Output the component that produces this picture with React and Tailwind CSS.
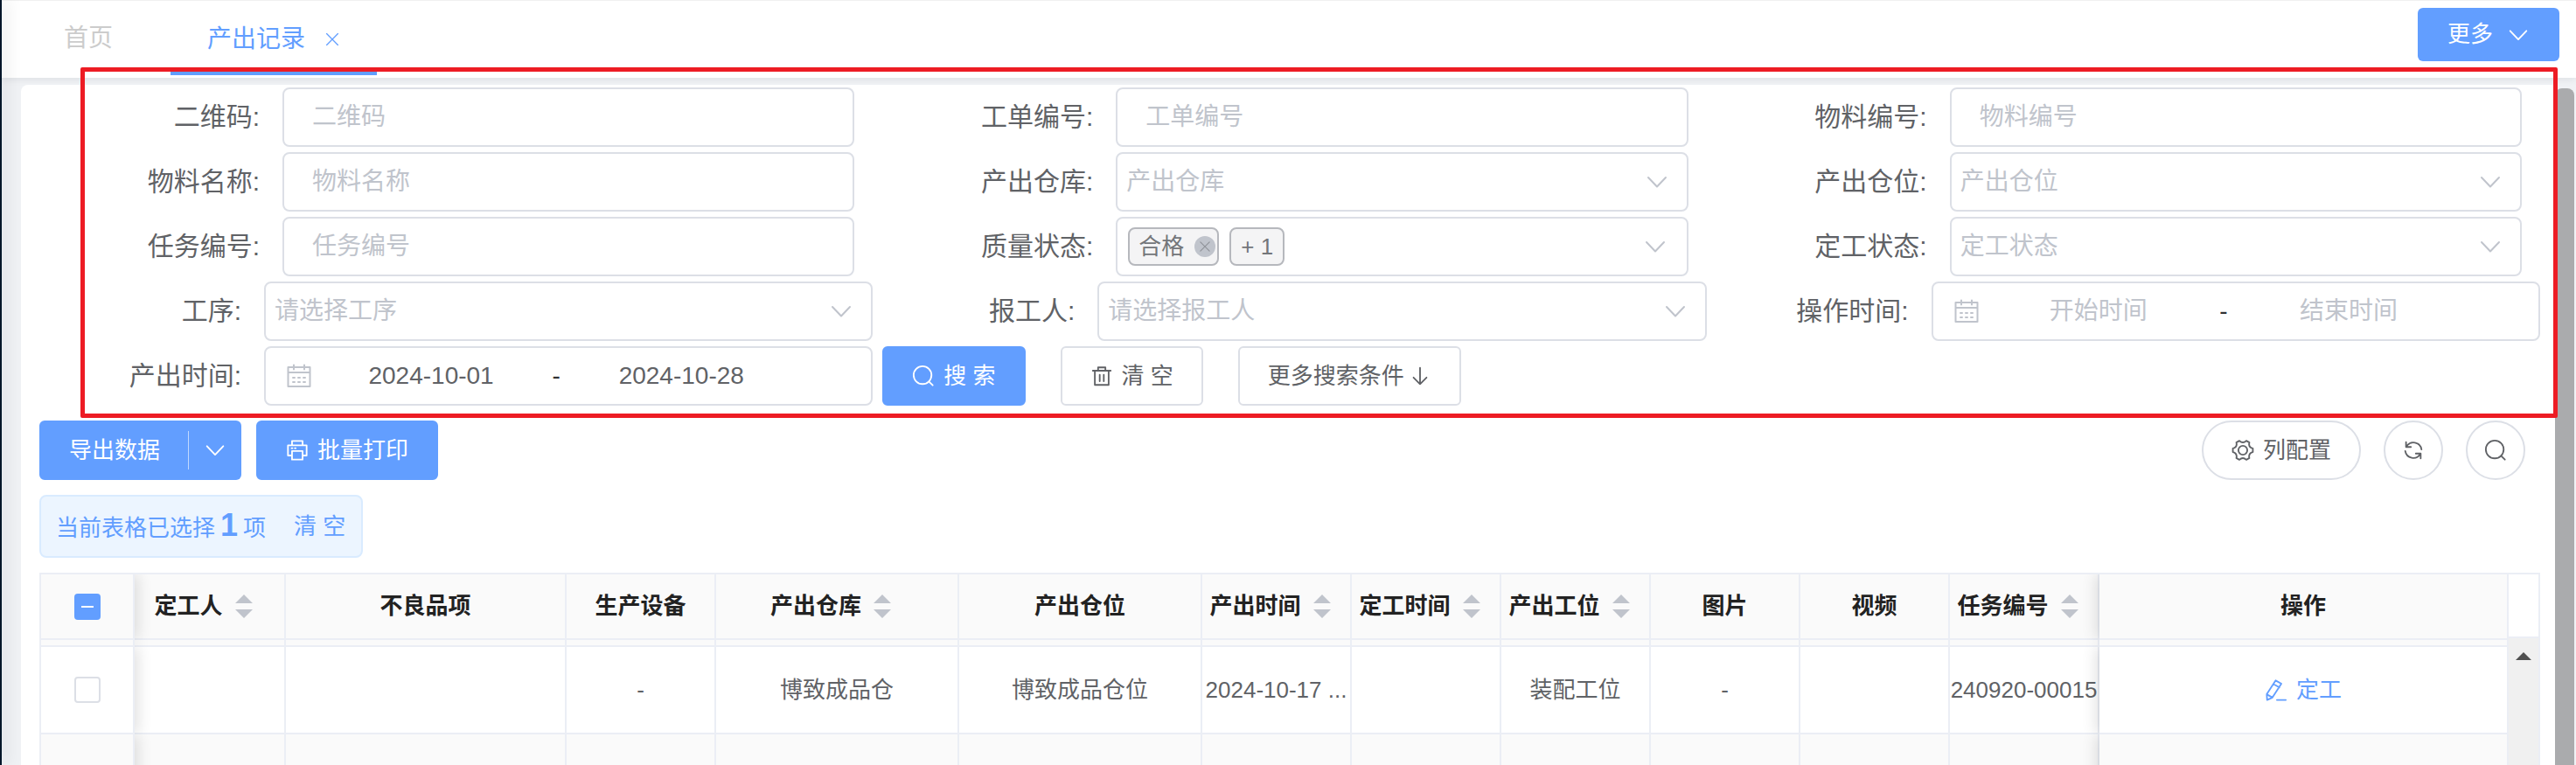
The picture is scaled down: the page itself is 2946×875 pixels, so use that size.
import React from "react";

const stroke = { fill: "none", stroke: "currentColor", strokeLinecap: "round", strokeLinejoin: "round" };

function Icon({ className = "size-[26px]", width = 2, children }) {
  return (
    <svg viewBox="0 0 28 28" className={`shrink-0 ${className}`} strokeWidth={width} {...stroke} aria-hidden="true">
      {children}
    </svg>
  );
}

const ChevronDown = (p) => (
  <Icon {...p}>
    <path d="M4 9 L14 19.5 L24 9" />
  </Icon>
);
const SearchIcon = () => (
  <Icon>
    <circle cx="13" cy="13" r="11" />
    <path d="M20.8 20.8 L25.5 25.5" />
  </Icon>
);
const TrashIcon = () => (
  <Icon>
    <path d="M3 7.5h22M9.5 7V3.5h9V7M5.5 8v17h17V8M11.5 12.5v8M16.5 12.5v8" />
  </Icon>
);
const ArrowDownIcon = () => (
  <Icon>
    <path d="M14 4v20M6 16l8 8 8-8" />
  </Icon>
);
const CalendarIcon = () => (
  <Icon className="size-7 text-[#c0c4cc]">
    <path d="M1.5 4h25v22h-25zM1.5 10h25M8 1.5v5M20 1.5v5" />
    <path d="M7 16h2M13 16h2M19 16h2M7 21h2M13 21h2M19 21h2" />
  </Icon>
);
const PrinterIcon = () => (
  <Icon>
    <path d="M7.5 8V2.5h13V8M7.5 20.5h-5V8h23v12.5h-5M7.5 15h13v10.5h-13zM7 11.5h1M11 11.5h1" />
  </Icon>
);
const GearIcon = () => (
  <Icon>
    <circle cx="14" cy="14" r="5.5" />
    <path d="M26.3 11.8V16.2Q20.5 17.8 22 23.6L18.3 25.7Q14 21.5 9.7 25.7L6 23.6Q7.5 17.8 1.7 16.2V11.8Q7.5 10.2 6 4.4L9.7 2.3Q14 6.5 18.3 2.3L22 4.4Q20.5 10.2 26.3 11.8z" />
  </Icon>
);
const RefreshIcon = () => (
  <Icon>
    <path d="M5 4v6h6M5.5 9.5A10 10 0 0 1 24 13M23 24v-6h-6M22.5 18.5A10 10 0 0 1 4 15" />
  </Icon>
);
const PencilIcon = () => (
  <Icon>
    <path d="M13.5 2.5l7 4L9.5 23.5l-6.5 3-.5-7zM11 7l7 4M2.5 19.5l7 4M15 26.5h11" />
  </Icon>
);

const fieldBox = "h-17 rounded-lg border-2 border-[#dcdfe6] bg-white";

function Field({ id, label, inset = false, children }) {
  return (
    <div className={`flex items-center ${inset ? "pr-[21px]" : ""}`}>
      <label
        htmlFor={id}
        className={`shrink-0 pr-[26px] text-right text-[30px] leading-10 text-[#606266] ${inset ? "w-[278px]" : "w-[257px]"}`}
      >
        {label}:
      </label>
      {children}
    </div>
  );
}

function TextField({ id, label }) {
  return (
    <Field id={id} label={label} inset>
      <input
        id={id}
        placeholder={label}
        className={`${fieldBox} min-w-0 flex-1 px-8 text-[28px] placeholder:text-[#c0c4cc]`}
      />
    </Field>
  );
}

function SelectField({ id, label, placeholder = label, inset = false }) {
  return (
    <Field id={id} label={label} inset={inset}>
      <div className="relative min-w-0 flex-1">
        <select id={id} className={`${fieldBox} block w-full appearance-none px-[10px] text-[28px] text-[#c0c4cc]`}>
          <option>{placeholder}</option>
        </select>
        <ChevronDown className="pointer-events-none absolute top-5 right-[22px] size-7 text-[#c0c4cc]" />
      </div>
    </Field>
  );
}

function QualityField() {
  const tag = "flex h-11 items-center rounded-lg border-2 border-[#b6b8bd] bg-[#f4f4f5] text-[26px] text-[#73767a]";
  return (
    <Field id="quality" label="质量状态" inset>
      <div className={`${fieldBox} flex min-w-0 flex-1 items-center gap-3 pr-[22px] pl-3`}>
        <span className={`${tag} pr-0.5 pl-[10px]`}>
          合格
          <button type="button" aria-label="移除合格" className="ml-3 grid size-6 place-items-center rounded-full bg-[#c0c4cc] text-[#909399]">
            <Icon className="size-4">
              <path d="M5 5l18 18M23 5L5 23" />
            </Icon>
          </button>
        </span>
        <span className={`${tag} px-[11px]`}>+ 1</span>
        <input id="quality" role="combobox" aria-expanded="false" readOnly className="min-w-0 flex-1 outline-none" />
        <ChevronDown className="size-7 text-[#c0c4cc]" />
      </div>
    </Field>
  );
}

function RangeField({ id, label, from, to }) {
  const cls = "min-w-0 flex-1 text-center text-[28px] text-[#606266] outline-none placeholder:text-[#c0c4cc]";
  return (
    <Field id={id} label={label}>
      <div className={`${fieldBox} flex min-w-0 flex-1 items-center pr-20 pl-6`}>
        <CalendarIcon />
        <input id={id} placeholder="开始时间" defaultValue={from} className={cls} />
        <span className="w-3 text-center text-[28px] text-[#303133]">-</span>
        <input aria-label={`${label}结束`} placeholder="结束时间" defaultValue={to} className={cls} />
      </div>
    </Field>
  );
}

const btn = "flex h-17 items-center gap-[10px] border-2 px-8 text-[26px] whitespace-nowrap";
const primary = "border-[#629eff] bg-[#629eff] text-white";
const plain = "border-[#dcdfe6] bg-white text-[#606266]";

const columns = [
  { title: "定工人", sort: true, value: "" },
  { title: "不良品项", value: "" },
  { title: "生产设备", value: "-" },
  { title: "产出仓库", sort: true, value: "博致成品仓" },
  { title: "产出仓位", value: "博致成品仓位" },
  { title: "产出时间", sort: true, value: "2024-10-17 ..." },
  { title: "定工时间", sort: true, value: "" },
  { title: "产出工位", sort: true, value: "装配工位" },
  { title: "图片", value: "-" },
  { title: "视频", value: "" },
  { title: "任务编号", sort: true, value: "240920-00015" },
];

const line = "border-r-2 border-b-2 border-[#ebeef5] p-0";
const fixedLeft = "relative z-10 shadow-[4px_0_16px_rgba(0,0,0,0.12)] [clip-path:inset(0_-24px_0_0)]";
const fixedRight = "relative z-10 shadow-[-4px_0_16px_rgba(0,0,0,0.12)] [clip-path:inset(0_0_0_-24px)]";

function SortCarets() {
  return (
    <svg viewBox="0 0 48 34" className="h-[34px] w-12 shrink-0 fill-[#c0c4cc]" aria-hidden="true">
      <path d="M14 13L24 3l10 10zM14 20h20L24 30z" />
    </svg>
  );
}

function DataTable() {
  return (
    <div className="mt-[17px] flex border-2 border-[#ebeef5]">
      <div className="min-w-0 flex-1">
        <table className="w-full table-fixed border-separate border-spacing-0 text-[26px] text-[#606266]">
          <colgroup>
            <col className="w-[107px]" />
            <col className="w-[173px]" />
            <col className="w-[321px]" />
            <col className="w-[171px]" />
            <col className="w-[278px]" />
            <col className="w-[278px]" />
            <col className="w-[171px]" />
            <col className="w-[171px]" />
            <col className="w-[171px]" />
            <col className="w-[171px]" />
            <col className="w-[171px]" />
            <col className="w-[171px]" />
            <col />
          </colgroup>
          <thead className="text-[#222]">
            <tr className="h-[75px]">
              <th className={`${line} ${fixedLeft} bg-[#fafafa]`}>
                <span className="mx-auto grid size-[30px] place-items-center">
                  <input type="checkbox" aria-label="全选" className="col-start-1 row-start-1 size-[30px] appearance-none rounded bg-[#629eff]" />
                  <span className="pointer-events-none col-start-1 row-start-1 h-0.5 w-[14px] bg-white" />
                </span>
              </th>
              {columns.map((c) => (
                <th key={c.title} className={`${line} bg-[#fafafa] font-bold`}>
                  <span className="flex items-center justify-center whitespace-nowrap">
                    {c.title}
                    {c.sort && <SortCarets />}
                  </span>
                </th>
              ))}
              <th className={`${line} ${fixedRight} bg-[#fafafa] font-bold`}>操作</th>
            </tr>
            <tr className="h-2" aria-hidden="true">
              <td className={`${line} ${fixedLeft} bg-[#fafafa]`} />
              {columns.map((c) => (
                <td key={c.title} className={`${line} bg-[#fafafa]`} />
              ))}
              <td className={`${line} ${fixedRight} bg-[#fafafa]`} />
            </tr>
          </thead>
          <tbody>
            <tr className="h-[100px]">
              <td className={`${line} ${fixedLeft} bg-white`}>
                <input type="checkbox" aria-label="选择行" className="mx-auto block size-[30px] appearance-none rounded border-2 border-[#dcdfe6] bg-white" />
              </td>
              {columns.map((c) => (
                <td key={c.title} className={`${line} text-center whitespace-nowrap`}>
                  {c.value}
                </td>
              ))}
              <td className={`${line} ${fixedRight} bg-white`}>
                <button type="button" className="mx-auto flex items-center gap-[10px] text-[#629eff]">
                  <PencilIcon />
                  定工
                </button>
              </td>
            </tr>
            <tr className="h-[100px]">
              <td className={`${line} ${fixedLeft} bg-[#fafafa]`} />
              {columns.map((c) => (
                <td key={c.title} className={`${line} bg-[#fafafa]`} />
              ))}
              <td className={`${line} ${fixedRight} bg-[#fafafa]`} />
            </tr>
          </tbody>
        </table>
      </div>
      <div className="flex w-[34px] shrink-0 flex-col">
        <div className="h-[73px] border-b-2 border-[#ebeef5]" />
        <div className="flex-1 bg-[#f0f0f0] pt-4">
          <svg viewBox="0 0 18 9" className="mx-auto h-[9px] w-[18px] fill-[#505050]" aria-hidden="true">
            <path d="M0 9L9 0l9 9z" />
          </svg>
        </div>
      </div>
    </div>
  );
}

export default function App() {
  return (
    <div className="relative flex h-screen overflow-hidden bg-[#f0f2f5] font-['Liberation_Sans','Noto_Sans_CJK_SC',sans-serif]">
      <aside className="relative z-20 w-0.5 shrink-0 bg-[#001529] shadow-[4px_0_16px_rgba(0,21,41,0.35)]" />
      <div className="flex min-w-0 flex-1 flex-col">
        <header className="relative z-10 flex h-[89px] shrink-0 items-start justify-between border-t border-[#f0f0f0] bg-white pr-[19px] shadow-[0_2px_8px_rgba(0,21,41,0.08)]">
          <nav className="flex text-[28px]">
            <a href="#home" className="flex h-[86px] items-center pr-[66px] pl-[71px] text-[#ccc]">
              首页
            </a>
            <div className="flex h-[85px] items-center gap-[22px] border-b-6 border-[#629eff] px-[42px] pt-2 text-[#629eff]">
              <a href="#output">产出记录</a>
              <button type="button" aria-label="关闭">
                <Icon className="size-[18px]">
                  <path d="M4 4l20 20M24 4L4 24" />
                </Icon>
              </button>
            </div>
          </nav>
          <button type="button" className={`mt-2 flex h-[61px] items-center gap-4 rounded-md px-[34px] text-[26px] ${primary}`}>
            更多
            <ChevronDown />
          </button>
        </header>

        <div className="flex min-h-0 flex-1 pt-2 pr-0.5 pl-[22px]">
          <main className="min-w-0 flex-1 overflow-hidden rounded-tl-lg bg-white pt-[3px] pr-[17px] pl-[21px]">
            <form className="grid grid-cols-3 gap-y-1.5" onSubmit={(e) => e.preventDefault()}>
              <TextField id="qr" label="二维码" />
              <TextField id="order" label="工单编号" />
              <TextField id="material-no" label="物料编号" />
              <TextField id="material-name" label="物料名称" />
              <SelectField id="warehouse" label="产出仓库" inset />
              <SelectField id="location" label="产出仓位" inset />
              <TextField id="task" label="任务编号" />
              <QualityField />
              <SelectField id="fix-status" label="定工状态" inset />
              <SelectField id="process" label="工序" placeholder="请选择工序" />
              <SelectField id="reporter" label="报工人" placeholder="请选择报工人" />
              <RangeField id="operate-time" label="操作时间" />
              <RangeField id="output-time" label="产出时间" from="2024-10-01" to="2024-10-28" />
              <div className="col-span-2 flex items-center gap-10 pl-[11px]">
                <button type="submit" className={`${btn} ${primary} rounded-md`}>
                  <SearchIcon />搜 索
                </button>
                <button type="reset" className={`${btn} ${plain} rounded-md`}>
                  <TrashIcon />清 空
                </button>
                <button type="button" className={`${btn} ${plain} rounded-md`}>
                  <span className="flex items-center gap-[5px]">
                    更多搜索条件
                    <ArrowDownIcon />
                  </span>
                </button>
              </div>
            </form>

            <div className="mt-[17px] flex items-center justify-between pr-[17px]">
              <div className="flex gap-[17px]">
                <div className="flex">
                  <button type="button" className={`${btn} ${primary} rounded-l-md pr-[30px]`}>
                    导出数据
                  </button>
                  <button type="button" aria-label="导出选项" className="flex h-17 items-center rounded-r-md bg-[#629eff] text-white">
                    <span className="h-11 w-px bg-white/60" />
                    <ChevronDown className="mx-[17px] size-[26px]" />
                  </button>
                </div>
                <button type="button" className={`${btn} ${primary} rounded-md`}>
                  <PrinterIcon />
                  批量打印
                </button>
              </div>
              <div className="flex gap-[26px]">
                <button type="button" className={`${btn} ${plain} rounded-full`}>
                  <GearIcon />
                  列配置
                </button>
                <button type="button" aria-label="刷新" className={`grid size-17 place-items-center rounded-full border-2 ${plain}`}>
                  <RefreshIcon />
                </button>
                <button type="button" aria-label="搜索" className={`grid size-17 place-items-center rounded-full border-2 ${plain}`}>
                  <SearchIcon />
                </button>
              </div>
            </div>

            <div className="mt-[17px] flex h-18 w-fit items-center rounded-lg border-2 border-[#d9ebff] bg-[#ecf5ff] pr-[18px] pl-[17px] text-[26px] text-[#629eff]">
              <p className="flex items-baseline gap-1.5 leading-9">
                当前表格已选择<b className="text-[36px] leading-9">1</b>项
              </p>
              <button type="button" className="ml-8">清 空</button>
            </div>

            <DataTable />
          </main>
          <div className="mt-1 w-[22px] shrink-0 rounded-t-lg bg-[#aaabad]" />
        </div>
      </div>
      <div className="pointer-events-none absolute top-[77px] right-[21px] left-[92px] z-30 h-[401px] rounded-xs border-5 border-[#ed1c24]" />
    </div>
  );
}
